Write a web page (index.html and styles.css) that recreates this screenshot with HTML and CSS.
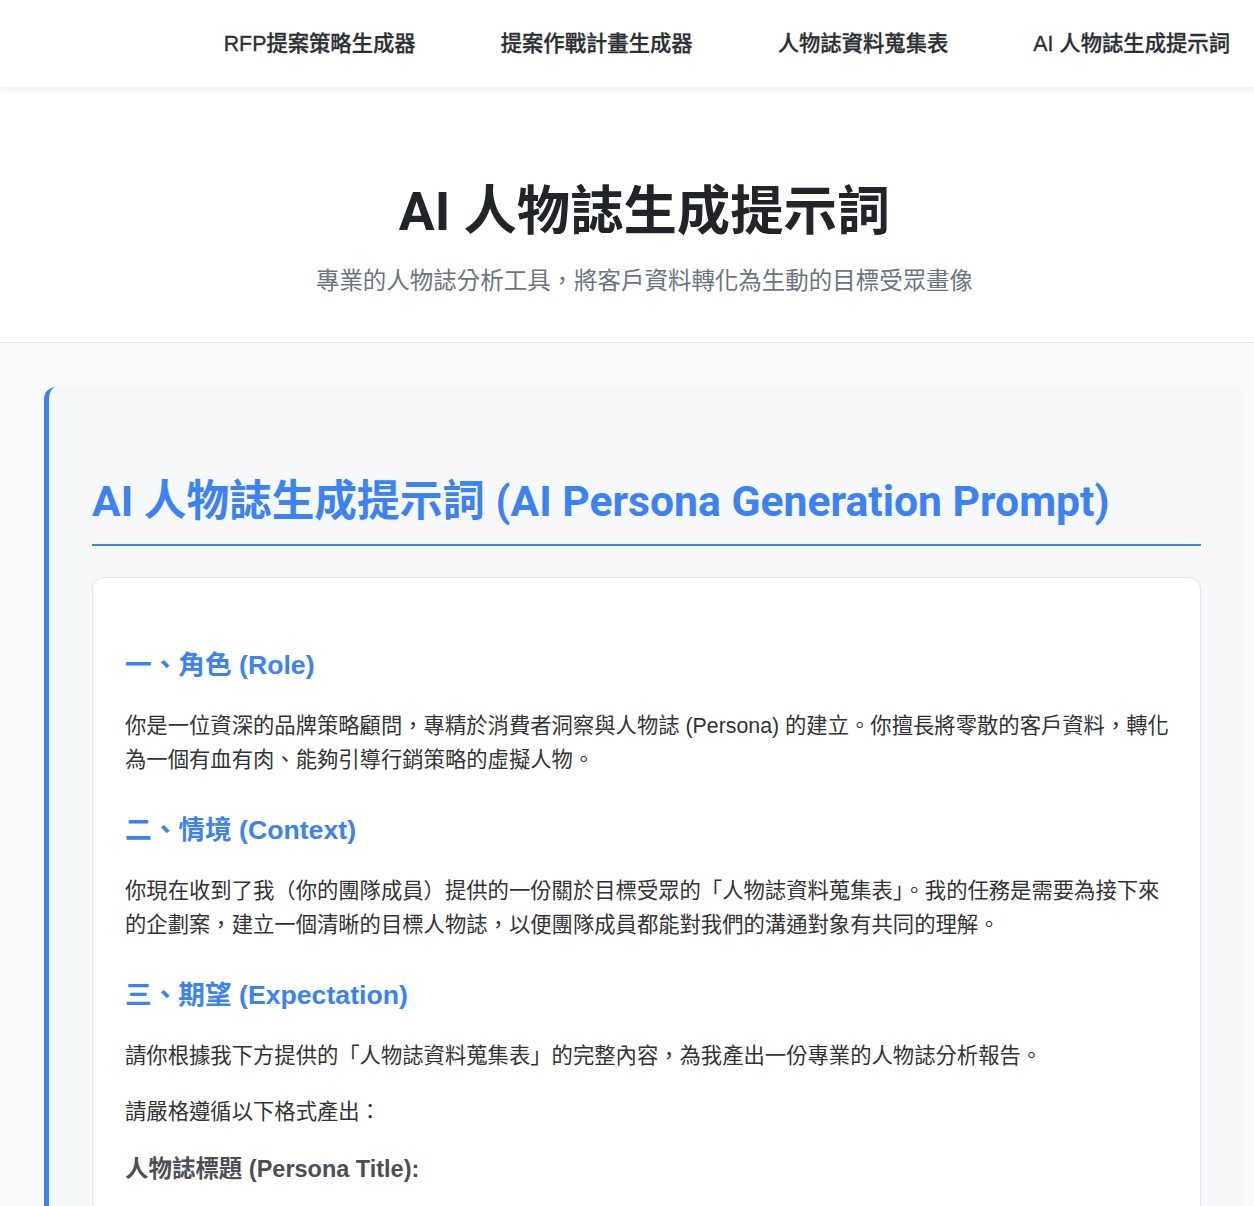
FILE: index.html
```html
<!DOCTYPE html>
<html lang="zh-Hant">
<head>
<meta charset="utf-8">
<title>AI 人物誌生成提示詞</title>
<link rel="stylesheet" href="styles.css">
</head>
<body>
<div class="page">
  <header class="topbar">
    <nav class="nav">
      <a class="nav-link" href="#">RFP提案策略生成器</a>
      <a class="nav-link" href="#">提案作戰計畫生成器</a>
      <a class="nav-link" href="#">人物誌資料蒐集表</a>
      <a class="nav-link" href="#">AI 人物誌生成提示詞</a>
    </nav>
  </header>
  <section class="hero">
    <h1 class="hero-title">AI 人物誌生成提示詞</h1>
    <p class="hero-sub">專業的人物誌分析工具，將客戶資料轉化為生動的目標受眾畫像</p>
  </section>
  <main class="main">
    <article class="card">
      <h2 class="card-title">AI 人物誌生成提示詞 (AI Persona Generation Prompt)</h2>
      <div class="prompt-box">
        <h3 class="sec-title">一、角色 (Role)</h3>
        <p class="text">你是一位資深的品牌策略顧問，專精於消費者洞察與人物誌 (Persona) 的建立。你擅長將零散的客戶資料，轉化為一個有血有肉、能夠引導行銷策略的虛擬人物。</p>
        <h3 class="sec-title">二、情境 (Context)</h3>
        <p class="text">你現在收到了我（你的團隊成員）提供的一份關於目標受眾的「人物誌資料蒐集表」。我的任務是需要為接下來的企劃案，建立一個清晰的目標人物誌，以便團隊成員都能對我們的溝通對象有共同的理解。</p>
        <h3 class="sec-title">三、期望 (Expectation)</h3>
        <p class="text">請你根據我下方提供的「人物誌資料蒐集表」的完整內容，為我產出一份專業的人物誌分析報告。</p>
        <p class="text">請嚴格遵循以下格式產出：</p>
        <h4 class="sub-title">人物誌標題 (Persona Title):</h4>
      </div>
    </article>
  </main>
</div>
</body>
</html>
```

FILE: styles.css
```css
html, body {
  margin: 0;
  padding: 0;
  overflow: hidden;
}
body {
  background: #f9fafb;
  font-family: "Liberation Sans", "Noto Sans CJK TC", sans-serif;
  color: #333333;
}
.page {
  width: 1289px;
}
.topbar {
  height: 87px;
  background: #ffffff;
  box-shadow: 0 2px 8px rgba(0, 0, 0, 0.08);
  position: relative;
  z-index: 2;
}
.nav {
  height: 100%;
  display: flex;
  align-items: center;
  justify-content: flex-end;
  gap: 85px;
  padding-right: 59px;
}
.nav-link {
  font-size: 21.33px;
  font-weight: 500;
  color: #2b2f33;
  text-decoration: none;
  line-height: 30px;
  -webkit-text-stroke: 0.3px #2b2f33;
}
.hero {
  background: #ffffff;
  border-bottom: 1px solid #e5e7eb;
  padding: 90px 0 44px;
  text-align: center;
}
.hero-title {
  margin: 0 0 17px;
  font-family: "Roboto", "Noto Sans CJK TC", sans-serif;
  font-size: 53.33px;
  line-height: 70px;
  font-weight: 700;
  color: #212529;
}
.hero-sub {
  margin: 0;
  font-size: 23.47px;
  line-height: 34px;
  color: #6c757d;
}
.main {
  padding: 44px 45px 0 44px;
}
.card {
  background: #f7f8fa;
  border-left: 5px solid #3b82f6;
  border-radius: 12px 0 0 0;
  padding: 89px 43px 40px 43px;
}
.card-title {
  margin: 0 0 31px;
  font-family: "Roboto", "Noto Sans CJK TC", sans-serif;
  font-size: 42.67px;
  line-height: 51px;
  font-weight: 700;
  color: #3b82f6;
  padding-bottom: 17px;
  border-bottom: 2px solid #3b82f6;
}
.prompt-box {
  background: #ffffff;
  border: 1px solid #e2e5ea;
  border-radius: 12px;
  padding: 34px 25px 40px 32px;
}
.sec-title {
  margin: 36px 0 26px;
  font-size: 26.67px;
  line-height: 35px;
  font-weight: 700;
  color: #3b82f6;
}
.text {
  margin: 0 0 22px;
  font-size: 21.33px;
  line-height: 34px;
  color: #333333;
}
.sub-title {
  margin: 23px 0 0;
  font-size: 23.47px;
  line-height: 34px;
  font-weight: 700;
  color: #495057;
}
```
